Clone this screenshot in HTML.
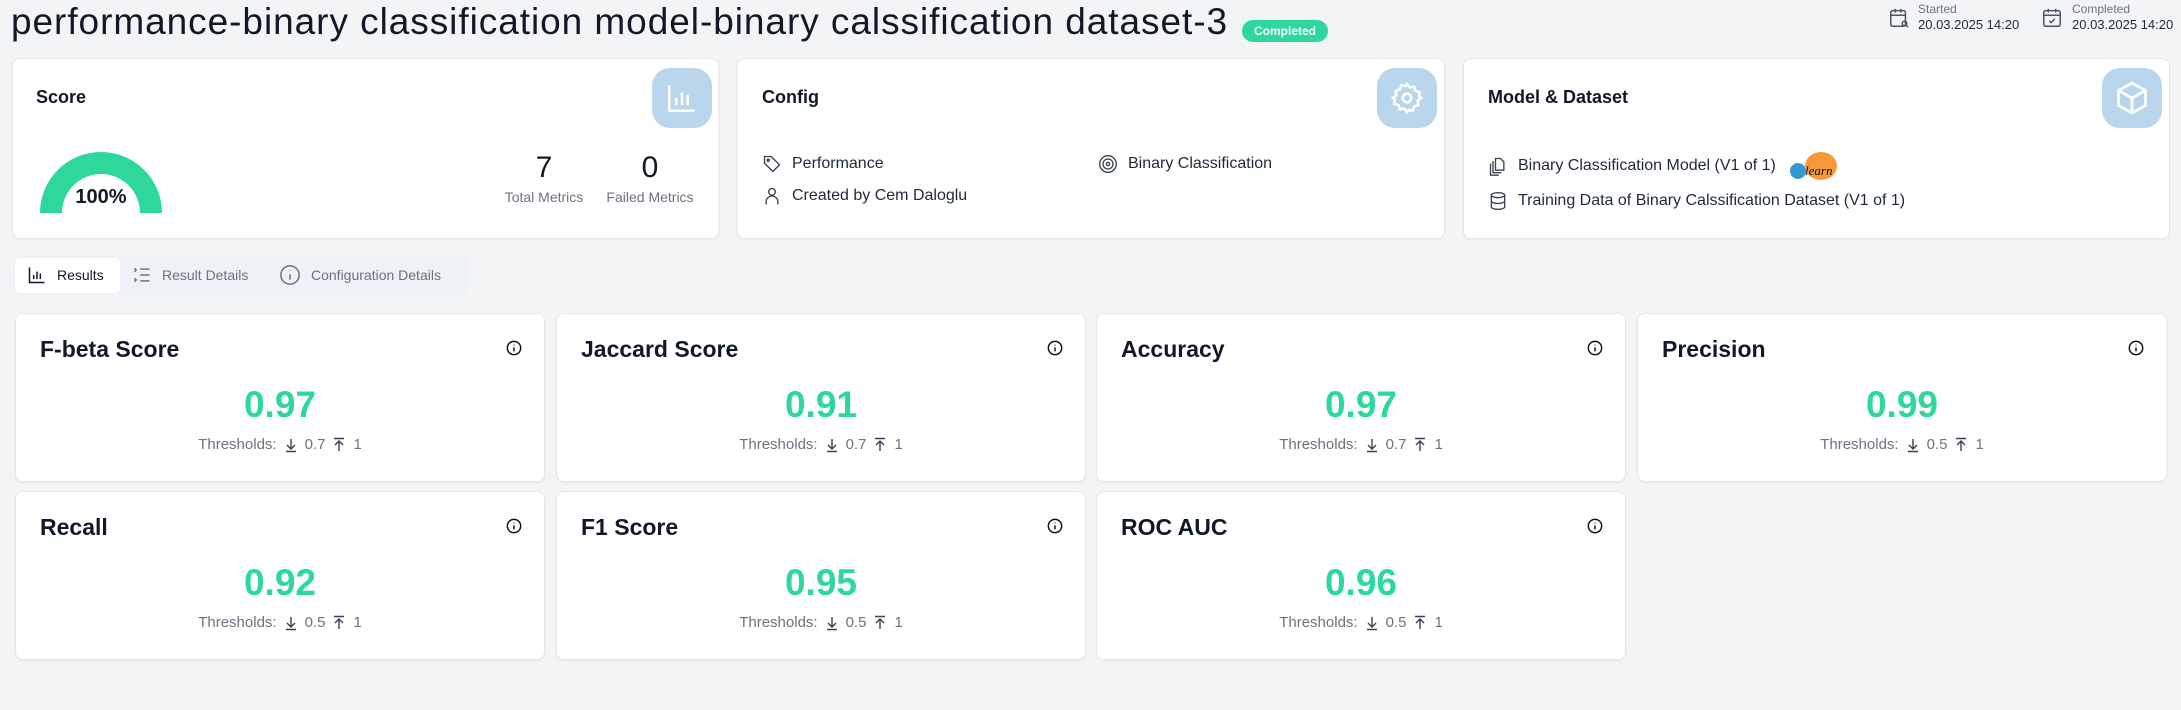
<!DOCTYPE html>
<html><head><meta charset="utf-8"><style>
*{box-sizing:border-box;margin:0;padding:0}
body{width:2181px;height:710px;background:#f3f4f6;font-family:"Liberation Sans",sans-serif;color:#111827;position:relative;overflow:hidden}
.abs{position:absolute}
.card{position:absolute;background:#fff;border:1px solid #e5e7eb;border-radius:8px;box-shadow:0 1px 2px rgba(0,0,0,.05)}
.ib{position:absolute;width:60px;height:60px;border-radius:18px;background:#b9d6ec;display:flex;align-items:center;justify-content:center}
.ct{position:absolute;font-size:18px;font-weight:bold;left:24px;top:28px}
.row{position:absolute;display:flex;align-items:center;font-size:16px;color:#1f2937;white-space:nowrap}
.row svg{margin-right:10px}
.m .t{position:absolute;left:24px;top:22px;font-size:23px;font-weight:bold}
.m .i{position:absolute;right:22px;top:26px}
.m .v{position:absolute;left:0;right:0;top:70px;text-align:center;font-size:37px;font-weight:bold;color:#2dd89a}
.m .th{position:absolute;left:0;right:0;top:122px;text-align:center;font-size:15px;color:#6b7280;display:flex;justify-content:center;align-items:center;gap:6px}
</style></head><body>
<div class="abs" style="left:11px;top:1px;font-size:37px;white-space:nowrap;letter-spacing:0.95px">performance-binary classification model-binary calssification dataset-3</div>
<div class="abs" style="left:1242px;top:20px;width:86px;height:22px;border-radius:11px;background:#2dd89a;color:#fff;font-size:12px;font-weight:bold;text-align:center;line-height:22px">Completed</div>

<svg class="abs" style="left:1888px;top:7px" width="22" height="22" viewBox="0 0 24 24" fill="none" stroke="#4b5563" stroke-width="1.6"><rect x="3" y="4" width="16" height="17" rx="2"/><path d="M3 9h16M8 2v4M14 2v4"/><circle cx="18" cy="18" r="2.5"/><path d="M20 20l2 2"/></svg>
<div class="abs" style="left:1918px;top:2px;font-size:12px;color:#6b7280">Started</div>
<div class="abs" style="left:1918px;top:17px;font-size:13px;color:#1f2937">20.03.2025 14:20</div>
<svg class="abs" style="left:2041px;top:7px" width="22" height="22" viewBox="0 0 24 24" fill="none" stroke="#4b5563" stroke-width="1.6"><rect x="3" y="4" width="18" height="17" rx="2"/><path d="M3 9h18M8 2v4M16 2v4M9 15l2 2 4-4"/></svg>
<div class="abs" style="left:2072px;top:2px;font-size:12px;color:#6b7280">Completed</div>
<div class="abs" style="left:2072px;top:17px;font-size:13px;color:#1f2937">20.03.2025 14:20</div>

<div class="card" style="left:12px;top:58px;width:707px;height:181px">
 <div class="ct" style="left:23px">Score</div>
 <div class="ib" style="left:639px;top:9px"><svg width="34" height="34" viewBox="0 0 24 24" fill="none" stroke="#fff" stroke-width="1.8"><path d="M3 3v18h18M8 17v-5M12 17V8M16 17v-7"/></svg></div>
 <svg class="abs" style="left:27px;top:92px" width="122" height="62" viewBox="0 0 122 62"><path d="M11 62 A50 50 0 0 1 111 62" fill="none" stroke="#2dd89a" stroke-width="22"/></svg>
 <div class="abs" style="left:28px;top:127px;width:120px;text-align:center;font-size:20px;font-weight:bold">100%</div>
 <div class="abs" style="left:491px;top:92px;width:80px;text-align:center;font-size:30px">7</div>
 <div class="abs" style="left:481px;top:130px;width:100px;text-align:center;font-size:14px;color:#6b7280">Total Metrics</div>
 <div class="abs" style="left:597px;top:92px;width:80px;text-align:center;font-size:30px">0</div>
 <div class="abs" style="left:584px;top:130px;width:106px;text-align:center;font-size:14px;color:#6b7280">Failed Metrics</div>
</div>

<div class="card" style="left:737px;top:58px;width:708px;height:181px">
 <div class="ct">Config</div>
 <div class="ib" style="left:639px;top:9px"><svg width="34" height="34" viewBox="0 0 24 24" fill="none" stroke="#fff" stroke-width="1.8"><circle cx="12" cy="12" r="3"/><path d="M12 2l2 2.5 3-.5 1 3 3 1-.5 3L22 12l-2.5 2 .5 3-3 1-1 3-3-.5L12 22l-2-2.5-3 .5-1-3-3-1 .5-3L2 12l2.5-2-.5-3 3-1 1-3 3 .5z"/></svg></div>
 <div class="row" style="left:24px;top:95px"><svg width="20" height="20" viewBox="0 0 24 24" fill="none" stroke="#374151" stroke-width="1.6"><path d="M3 3h8l10 10-8 8L3 11z"/><circle cx="7.5" cy="7.5" r="1.3"/></svg>Performance</div>
 <div class="row" style="left:24px;top:127px"><svg width="20" height="20" viewBox="0 0 24 24" fill="none" stroke="#374151" stroke-width="1.6"><circle cx="12" cy="7" r="4"/><path d="M5 22v-3a7 7 0 0 1 14 0v3"/></svg>Created by Cem Daloglu</div>
 <div class="row" style="left:360px;top:95px"><svg width="20" height="20" viewBox="0 0 24 24" fill="none" stroke="#374151" stroke-width="1.6"><circle cx="12" cy="12" r="10"/><circle cx="12" cy="12" r="6"/><circle cx="12" cy="12" r="2"/></svg>Binary Classification</div>
</div>

<div class="card" style="left:1463px;top:58px;width:707px;height:181px">
 <div class="ct">Model &amp; Dataset</div>
 <div class="ib" style="left:638px;top:9px"><svg width="36" height="36" viewBox="0 0 24 24" fill="none" stroke="#fff" stroke-width="1.8"><path d="M12 2l9 5v10l-9 5-9-5V7z"/><path d="M3 7l9 5 9-5M12 12v10"/></svg></div>
 <div class="row" style="left:24px;top:92px"><svg width="20" height="20" viewBox="0 0 24 24" fill="none" stroke="#374151" stroke-width="1.6"><path d="M9 3h6l4 4v10H9z"/><path d="M6 6v14h10"/><path d="M3 9v14h10"/></svg>Binary Classification Model (V1 of 1)
  <svg width="52" height="30" viewBox="0 0 52 30" style="margin-left:12px"><circle cx="10" cy="20" r="8" fill="#3499cd"/><ellipse cx="33" cy="15" rx="16" ry="14" fill="#f89939"/><text x="17" y="24" font-family="Liberation Serif,serif" font-style="italic" font-size="13" fill="#111">learn</text></svg></div>
 <div class="row" style="left:24px;top:132px"><svg width="20" height="20" viewBox="0 0 24 24" fill="none" stroke="#374151" stroke-width="1.6"><ellipse cx="12" cy="5" rx="8" ry="3"/><path d="M4 5v14c0 1.7 3.6 3 8 3s8-1.3 8-3V5M4 12c0 1.7 3.6 3 8 3s8-1.3 8-3"/></svg>Training Data of Binary Calssification Dataset (V1 of 1)</div>
</div>

<div class="abs" style="left:13px;top:256px;width:455px;height:39px;background:#eef1f6;border-radius:6px"></div>
<div class="abs" style="left:15px;top:258px;width:105px;height:35px;background:#fff;border-radius:5px"></div>
<div class="row" style="left:27px;top:265px;font-size:14px;color:#111827"><svg width="20" height="20" viewBox="0 0 24 24" fill="none" stroke="#111827" stroke-width="1.8"><path d="M3 3v18h18M8 17v-5M12 17V8M16 17v-7"/></svg>Results</div>
<div class="row" style="left:132px;top:265px;font-size:14px;color:#6b7280"><svg width="20" height="20" viewBox="0 0 24 24" fill="none" stroke="#6b7280" stroke-width="1.8"><path d="M10 5h11M10 12h11M10 19h11M3 4l2 2-2 2M3 16l2 2-2 2"/></svg>Result Details</div>
<div class="row" style="left:279px;top:264px;font-size:14px;color:#6b7280"><svg width="22" height="22" viewBox="0 0 24 24" fill="none" stroke="#6b7280" stroke-width="1.6"><circle cx="12" cy="12" r="10"/><path d="M12 11v6M12 7v.5"/></svg>Configuration Details</div>

<svg width="0" height="0" style="position:absolute"><defs>
<symbol id="dn" viewBox="0 0 16 16"><path d="M8 2v10M4 8l4 4 4-4M3 14.5h10" fill="none" stroke="#374151" stroke-width="1.4"/></symbol>
<symbol id="up" viewBox="0 0 16 16"><path d="M8 14V4M4 8l4-4 4 4M3 1.5h10" fill="none" stroke="#374151" stroke-width="1.4"/></symbol>
<symbol id="inf" viewBox="0 0 24 24"><circle cx="12" cy="12" r="10" fill="none" stroke="#111" stroke-width="2.2"/><path d="M12 11v6M12 7v1" stroke="#111" stroke-width="2.2"/></symbol>
</defs></svg>

<div class="card m" style="left:15px;top:313px;width:530px;height:169px"><div class="t">F-beta Score</div><svg class="i" width="16" height="16"><use href="#inf"/></svg><div class="v">0.97</div><div class="th">Thresholds: <svg width="16" height="16"><use href="#dn"/></svg>0.7 <svg width="16" height="16"><use href="#up"/></svg>1</div></div>
<div class="card m" style="left:556px;top:313px;width:530px;height:169px"><div class="t">Jaccard Score</div><svg class="i" width="16" height="16"><use href="#inf"/></svg><div class="v">0.91</div><div class="th">Thresholds: <svg width="16" height="16"><use href="#dn"/></svg>0.7 <svg width="16" height="16"><use href="#up"/></svg>1</div></div>
<div class="card m" style="left:1096px;top:313px;width:530px;height:169px"><div class="t">Accuracy</div><svg class="i" width="16" height="16"><use href="#inf"/></svg><div class="v">0.97</div><div class="th">Thresholds: <svg width="16" height="16"><use href="#dn"/></svg>0.7 <svg width="16" height="16"><use href="#up"/></svg>1</div></div>
<div class="card m" style="left:1637px;top:313px;width:530px;height:169px"><div class="t">Precision</div><svg class="i" width="16" height="16"><use href="#inf"/></svg><div class="v">0.99</div><div class="th">Thresholds: <svg width="16" height="16"><use href="#dn"/></svg>0.5 <svg width="16" height="16"><use href="#up"/></svg>1</div></div>
<div class="card m" style="left:15px;top:491px;width:530px;height:169px"><div class="t">Recall</div><svg class="i" width="16" height="16"><use href="#inf"/></svg><div class="v">0.92</div><div class="th">Thresholds: <svg width="16" height="16"><use href="#dn"/></svg>0.5 <svg width="16" height="16"><use href="#up"/></svg>1</div></div>
<div class="card m" style="left:556px;top:491px;width:530px;height:169px"><div class="t">F1 Score</div><svg class="i" width="16" height="16"><use href="#inf"/></svg><div class="v">0.95</div><div class="th">Thresholds: <svg width="16" height="16"><use href="#dn"/></svg>0.5 <svg width="16" height="16"><use href="#up"/></svg>1</div></div>
<div class="card m" style="left:1096px;top:491px;width:530px;height:169px"><div class="t">ROC AUC</div><svg class="i" width="16" height="16"><use href="#inf"/></svg><div class="v">0.96</div><div class="th">Thresholds: <svg width="16" height="16"><use href="#dn"/></svg>0.5 <svg width="16" height="16"><use href="#up"/></svg>1</div></div>
</body></html>
